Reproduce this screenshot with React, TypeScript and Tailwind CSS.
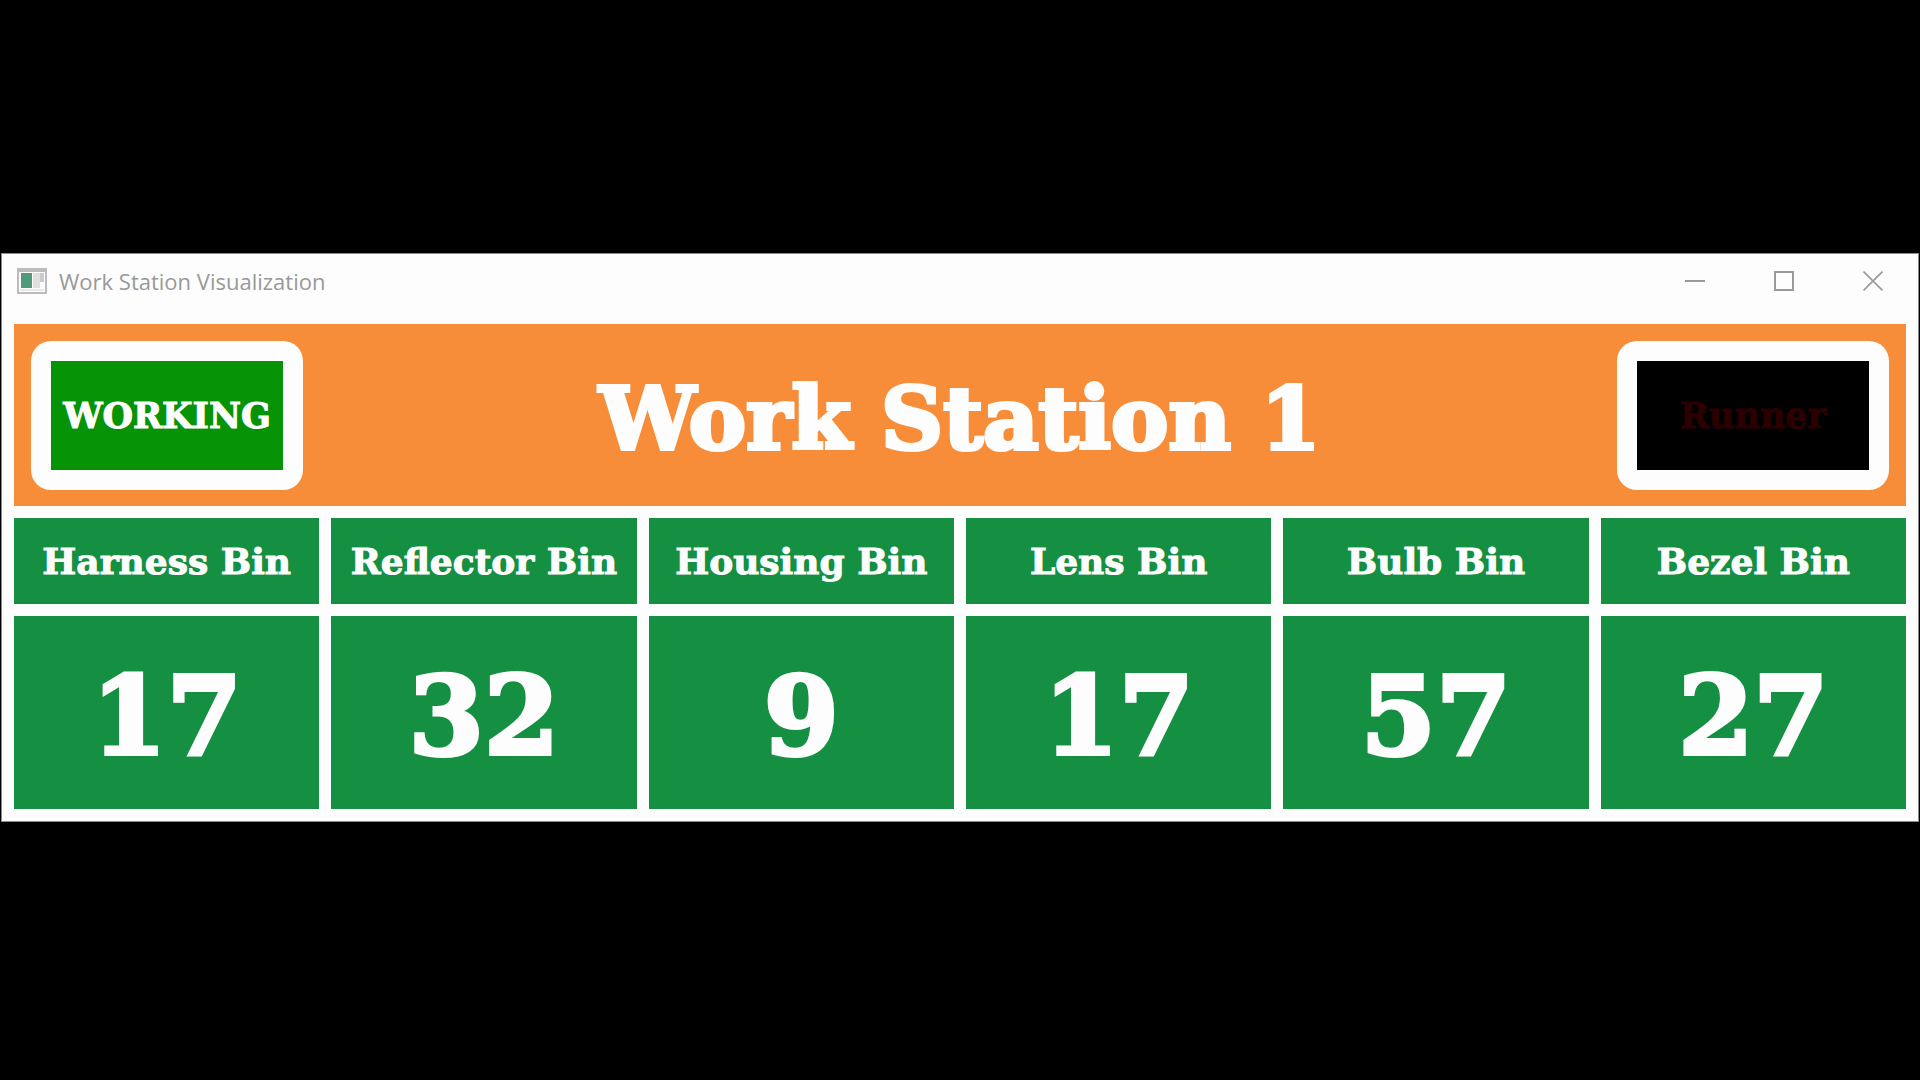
type Bin = { name: string; count: number };

const bins: Bin[] = [
  { name: "Harness Bin", count: 17 },
  { name: "Reflector Bin", count: 32 },
  { name: "Housing Bin", count: 9 },
  { name: "Lens Bin", count: 17 },
  { name: "Bulb Bin", count: 57 },
  { name: "Bezel Bin", count: 27 },
];

function AppIcon() {
  return (
    <svg width="30" height="26" viewBox="0 0 30 26" aria-hidden="true">
      <rect x="1" y="1" width="28" height="24" fill="#fdfdfd" stroke="#bcbcbc" strokeWidth="2" />
      <rect x="1" y="1" width="28" height="3" fill="#bcbcbc" />
      <rect x="4" y="5" width="11" height="15" fill="#4f9a7c" />
      <rect x="16" y="5" width="7" height="15" fill="#e4dede" />
      <rect x="23" y="5" width="4" height="9" fill="#c9c9d4" />
      <rect x="3" y="21" width="24" height="2" fill="#e8e8e8" />
    </svg>
  );
}

function TitleBar() {
  const button = "flex h-[54px] w-[89px] items-center justify-center";
  return (
    <div className="flex h-[54px] items-center pl-[15px] pr-px">
      <AppIcon />
      <span className="ml-3 flex-1 font-['Open_Sans','Noto_Sans',sans-serif] text-[22px] leading-7 text-[#999999]">
        Work Station Visualization
      </span>
      <button type="button" aria-label="Minimize" className={button}>
        <svg width="20" height="20" viewBox="0 0 20 20" stroke="#999999" strokeWidth="2">
          <path d="M0 10h20" />
        </svg>
      </button>
      <button type="button" aria-label="Maximize" className={button}>
        <svg width="20" height="20" viewBox="0 0 20 20" fill="none" stroke="#999999" strokeWidth="2">
          <rect x="1" y="1" width="18" height="18" />
        </svg>
      </button>
      <button type="button" aria-label="Close" className={button}>
        <svg width="20" height="20" viewBox="0 0 20 20" stroke="#999999" strokeWidth="1.6">
          <path d="M.5 .5l19 19M19.5 .5l-19 19" />
        </svg>
      </button>
    </div>
  );
}

function StatusLamp({ label, tone }: { label: string; tone: string }) {
  return (
    <div className="rounded-[20px] bg-[#fdfdfd] p-5">
      <div className={`flex h-[109px] w-[232px] items-center justify-center text-[35px] leading-10 ${tone}`}>
        {label}
      </div>
    </div>
  );
}

export default function App() {
  return (
    <div className="flex min-h-screen flex-col justify-center bg-black pb-[5px]">
      <main className="mx-px border border-[#8a8a8a] bg-[#fdfdfd] font-['DejaVu_Serif',serif] font-bold text-[#fdfdfd]">
        <div className="font-normal">
          <TitleBar />
        </div>
        <header className="mx-3 mt-4 flex items-center justify-between bg-[#f78d38] px-[17px] pb-4 pt-[17px]">
          <StatusLamp label="WORKING" tone="bg-[#069406] [-webkit-text-stroke:1px_#fdfdfd]" />
          <h1 className="pt-[6px] text-[86px] leading-none [-webkit-text-stroke:4px_#fdfdfd]">Work Station 1</h1>
          <StatusLamp label="Runner" tone="bg-black text-[#2c0000] [-webkit-text-stroke:1px_#2c0000]" />
        </header>
        <table className="w-full table-fixed border-separate border-spacing-3">
          <thead>
            <tr>
              {bins.map((bin) => (
                <th
                  key={bin.name}
                  scope="col"
                  className="h-[86px] whitespace-nowrap bg-[#158f42] p-0 text-center text-[36px] leading-10 [-webkit-text-stroke:1px_#fdfdfd]"
                >
                  {bin.name}
                </th>
              ))}
            </tr>
          </thead>
          <tbody>
            <tr>
              {bins.map((bin) => (
                <td
                  key={bin.name}
                  className="h-[193px] bg-[#158f42] p-0 pt-1.5 text-center text-[108px] leading-none [-webkit-text-stroke:4px_#fdfdfd]"
                >
                  {bin.count}
                </td>
              ))}
            </tr>
          </tbody>
        </table>
      </main>
    </div>
  );
}
